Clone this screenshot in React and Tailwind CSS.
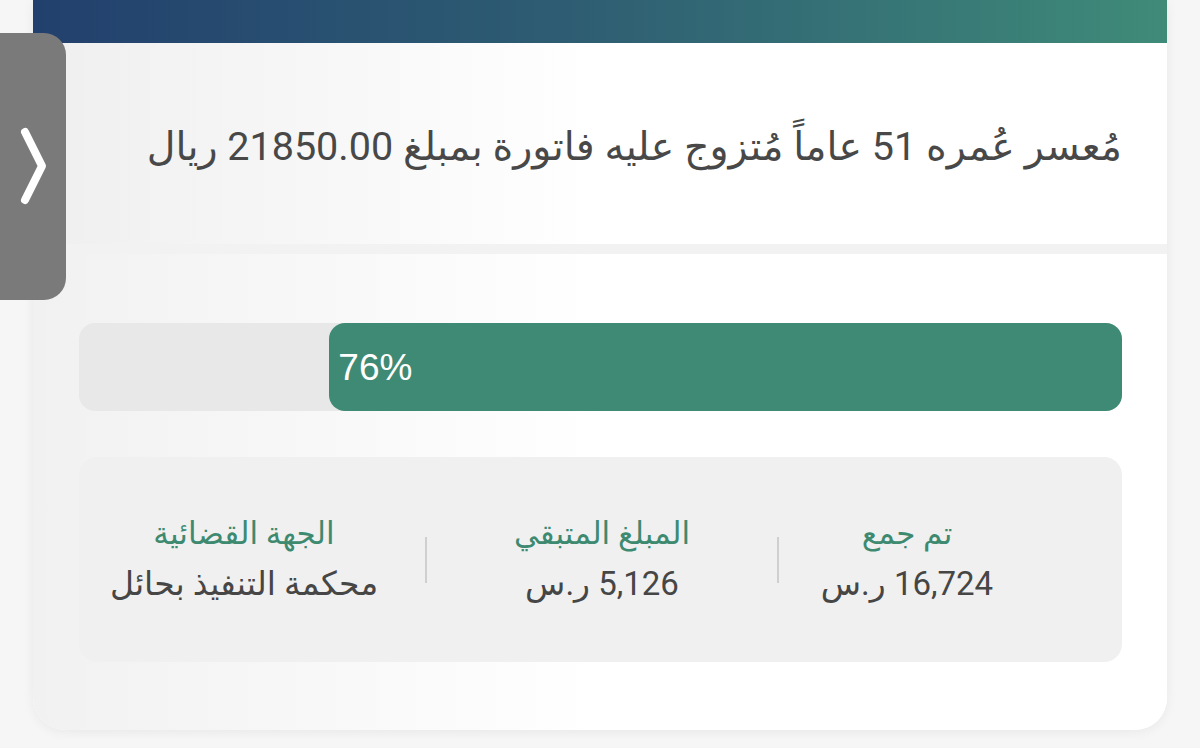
import React from "react";

const FONT = { fontFamily: "Roboto, 'DejaVu Sans', sans-serif" };

function Stat({ label, value, width }) {
  return (
    <div className={`flex flex-col items-center justify-center ${width}`} dir="rtl">
      <div className="text-[31px] leading-[40px] text-[#3d8a70]">{label}</div>
      <div className="text-[33px] leading-[44px] text-[#464646] mt-[8px]">{value}</div>
    </div>
  );
}

export default function App() {
  return (
    <div className="relative w-[1200px] h-[748px] overflow-hidden bg-[#f6f6f6]" style={FONT}>
      <div className="ml-[33px] w-[1134px] h-[730px] flex flex-col rounded-b-[32px] overflow-hidden bg-white shadow-[0_2px_12px_rgba(0,0,0,0.06)]">
        <div className="h-[43px] bg-gradient-to-r from-[#22406d] via-[#2f5f73] to-[#3f8b78]" />
        <div className="h-[201px] flex items-center justify-end pr-[45px] bg-gradient-to-r from-[#efefef] via-white via-50% to-white">
          <div dir="rtl" className="text-[39.5px] leading-[52px] text-[#484848] pt-[6px] whitespace-nowrap">
            مُعسر عُمره 51 عاماً مُتزوج عليه فاتورة بمبلغ 21850.00 ريال
          </div>
        </div>
        <div className="h-[10px] bg-[#f2f2f2]" />
        <div className="flex-1 flex flex-col pl-[46px] pr-[45px] pt-[69px] bg-gradient-to-r from-[#f1f1f1] via-white via-50% to-white">
          <div className="h-[88px] rounded-[16px] bg-[#e8e8e8] flex justify-end">
            <div className="w-[76%] h-full rounded-[16px] bg-[#3f8a74] flex items-center pl-[9px]">
              <span className="text-[37px] leading-none text-white" style={{ fontFamily: "'Liberation Sans', Arial, sans-serif" }}>76%</span>
            </div>
          </div>
          <div className="mt-[46px] h-[205px] rounded-[18px] bg-[#f0f0f0] flex items-center">
            <Stat label="الجهة القضائية" value="محكمة التنفيذ بحائل" width="w-[330px]" />
            <div className="w-[16px]" />
            <div className="w-[2px] h-[46px] bg-[#cfcfcf]" />
            <Stat label="المبلغ المتبقي" value="5,126 ر.س" width="w-[350px]" />
            <div className="w-[2px] h-[46px] bg-[#cfcfcf]" />
            <Stat label="تم جمع" value="16,724 ر.س" width="w-[256px]" />
          </div>
        </div>
      </div>
      <div className="absolute left-0 top-[33px] w-[66px] h-[267px] bg-[#7a7a7a] rounded-r-[22px]">
        <svg width="66" height="267" viewBox="0 0 66 267" className="absolute left-0 top-0">
          <polyline points="25,99 42,133 25,167" fill="none" stroke="white" strokeWidth="8" strokeLinecap="round" strokeLinejoin="round" />
        </svg>
      </div>
    </div>
  );
}
